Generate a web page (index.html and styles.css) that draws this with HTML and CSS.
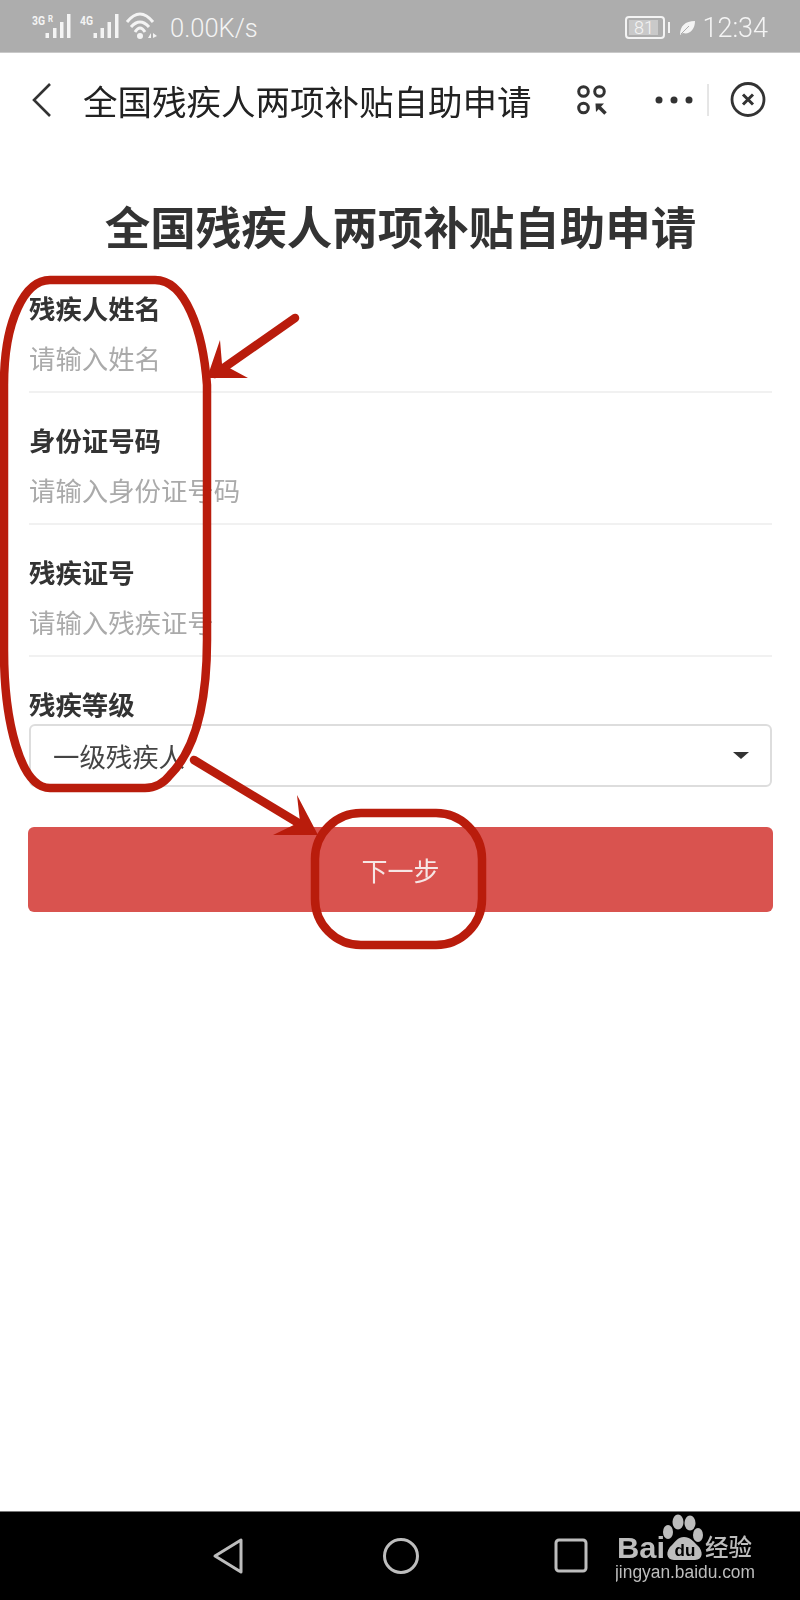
FILE: index.html
```html
<!DOCTYPE html>
<html lang="zh-CN">
<head>
<meta charset="utf-8">
<title>全国残疾人两项补贴自助申请</title>
<link rel="stylesheet" href="styles.css">
</head>
<body>
<div class="screen">
  <header class="status">
    <svg class="signals" width="130" height="52" viewBox="0 0 130 52">
      <text class="net" x="1" y="25" textLength="13" lengthAdjust="spacingAndGlyphs">3G</text><text class="net-r" x="17" y="22" textLength="5" lengthAdjust="spacingAndGlyphs">R</text>
      <g fill="#f4f4f4">
        <rect x="14.500" y="33" width="3.500" height="5"/><rect x="22" y="28" width="3.500" height="10"/><rect x="29" y="22" width="3.500" height="16"/><rect x="36" y="14" width="3.500" height="24"/>
      </g>
      <text class="net" x="49" y="25" textLength="13" lengthAdjust="spacingAndGlyphs">4G</text>
      <g fill="#f4f4f4">
        <rect x="62.500" y="33" width="3.500" height="5"/><rect x="69.500" y="28" width="3.500" height="10"/><rect x="76.500" y="22" width="3.500" height="16"/><rect x="84" y="14" width="3.500" height="24"/>
      </g>
      <g fill="none" stroke="#f4f4f4" stroke-width="3">
        <path d="M96 22 Q109 6 122 22"/><path d="M100 27 Q109 17 118 27"/><path d="M104 32 Q109 24 114 32"/>
      </g>
      <circle cx="109" cy="36" r="3" fill="#f4f4f4"/>
      <path d="M117 38 L120 33 V38 Z M122 33 L126 36 L122 38 Z" fill="#f4f4f4"/>
    </svg>
    <span class="speed">0.00K/s</span>
    <div class="status-right">
      <span class="battery"><span class="battery-level">81</span></span>
      <span class="battery-nub"></span>
      <svg class="leaf" width="16" height="16" viewBox="0 0 16 16"><path d="M1 15 C1 6 6 1 16 1 C16 10 10 15 4 13 Z" fill="#f4f4f4"/><path d="M2 14 L10 6" stroke="#adadad" stroke-width="1"/></svg>
      <span class="clock">12:34</span>
    </div>
  </header>

  <nav class="navbar">
    <svg class="back" width="20" height="34" viewBox="0 0 20 34"><path d="M18 1 L2 17 L18 33" fill="none" stroke="#333" stroke-width="2.600"/></svg>
    <span class="nav-title">全国残疾人两项补贴自助申请</span>
    <svg class="nav-actions" width="200" height="40" viewBox="0 0 200 40">
      <g fill="none" stroke="#333" stroke-width="3">
        <circle cx="7.500" cy="11.500" r="4.800"/><circle cx="23.500" cy="11.500" r="4.800"/><circle cx="7.500" cy="28" r="4.800"/>
      </g>
      <path d="M19.500 23.500 H28 L20 32 Z" fill="#333"/>
      <path d="M22 26 L29.500 33.500" stroke="#333" stroke-width="3.500"/>
      <g fill="#333"><circle cx="83" cy="20" r="3.500"/><circle cx="98" cy="20" r="3.500"/><circle cx="113" cy="20" r="3.500"/></g>
      <path d="M132 4 V36" stroke="#ccc" stroke-width="1"/>
      <circle cx="172" cy="19.500" r="16" fill="none" stroke="#333" stroke-width="2.800"/>
      <path d="M167 14.500 L177 24.500 M177 14.500 L167 24.500" stroke="#333" stroke-width="3"/>
    </svg>
  </nav>

  <main class="page">
    <h1 class="page-title">全国残疾人两项补贴自助申请</h1>
    <form class="form">
      <div class="field">
        <div class="label">残疾人姓名</div>
        <div class="input">请输入姓名</div>
      </div>
      <div class="field">
        <div class="label">身份证号码</div>
        <div class="input">请输入身份证号码</div>
      </div>
      <div class="field">
        <div class="label">残疾证号</div>
        <div class="input">请输入残疾证号</div>
      </div>
      <div class="field field-select">
        <div class="label">残疾等级</div>
        <div class="select">
          <span class="select-value">一级残疾人</span>
          <span class="caret"></span>
        </div>
      </div>
      <div class="submit">下一步</div>
    </form>
  </main>

  <footer class="sysbar">
    <svg class="sys-back" width="34" height="38" viewBox="0 0 34 38"><path d="M30 3 V35 L4 19 Z" fill="none" stroke="#bdbdbd" stroke-width="3" stroke-linejoin="round"/></svg>
    <svg class="sys-home" width="38" height="38" viewBox="0 0 38 38"><circle cx="19" cy="19" r="16.500" fill="none" stroke="#bdbdbd" stroke-width="3"/></svg>
    <svg class="sys-recent" width="34" height="36" viewBox="0 0 34 36"><rect x="2" y="2" width="30" height="31" rx="3" fill="none" stroke="#bdbdbd" stroke-width="3"/></svg>
    <svg class="logo" width="148" height="72" viewBox="0 0 148 72">
      <text class="logo-bai" x="1" y="46" textLength="48" lengthAdjust="spacingAndGlyphs">Bai</text>
      <g fill="#bdbdbd">
        <ellipse cx="62" cy="10" rx="5.500" ry="7.500"/><ellipse cx="74" cy="11" rx="5.500" ry="7.500"/><ellipse cx="52" cy="20" rx="5" ry="7"/><ellipse cx="82" cy="23" rx="5" ry="7"/>
        <path d="M68 25 C74 25 77 29 81 33 C88 39 87 48 79 48 H58 C50 48 49 39 56 33 C60 29 62 25 68 25 Z"/>
      </g>
      <text class="logo-du" x="69" y="44">du</text>
      <text class="logo-cn" x="89" y="44">经验</text>
      <text class="logo-url" x="-1" y="66" textLength="140" lengthAdjust="spacingAndGlyphs">jingyan.baidu.com</text>
    </svg>
  </footer>

  <svg class="marks" width="800" height="1000" viewBox="0 0 800 1000">
    <g fill="none" stroke="#b91c0c" stroke-width="8.500" stroke-linecap="round">
      <path d="M50 280 H155 C185 280 203 330 207 385 V640 C207 690 200 745 170 775 Q160 788 145 788 H50 C20 788 4 720 4 650 V385 C4 320 25 280 50 280 Z"/>
      <rect x="315" y="813" width="167" height="132" rx="46"/>
      <path d="M295 318 L215 374"/>
      <path d="M194 760 L305 827"/>
    </g>
    <path d="M207 378 L220 340 L222 364 L248 378 Z" fill="#b91c0c"/>
    <path d="M318 835 L297 795 L300 822 L273 835 Z" fill="#b91c0c"/>
  </svg>
</div>
</body>
</html>
```

FILE: styles.css
```css
* { box-sizing: border-box; }
html, body { margin: 0; padding: 0; background: #fff; }
body { font-family: "Noto Sans CJK SC", "Noto Sans", sans-serif; }

.screen {
  position: relative;
  width: 800px;
  height: 1600px;
  display: flex;
  flex-direction: column;
  overflow: hidden;
  filter: blur(0.4px);
}

/* status bar */
.status {
  flex: none;
  height: 53px;
  background: #adadad;
  border-bottom: 1px solid #c9c9c9;
  display: flex;
  align-items: center;
  padding-left: 31px;
  padding-right: 32px;
  color: #f4f4f4;
}
.signals { flex: none; }
.net { font: 700 12.5px "Roboto", sans-serif; fill: #f4f4f4; }
.net-r { font: 700 9px "Roboto", sans-serif; fill: #f4f4f4; }
.speed {
  font: 300 25.5px/47px "Roboto", sans-serif;
  padding-top: 5px;
  margin-left: 9px;
}
.status-right {
  margin-left: auto;
  display: flex;
  align-items: center;
}
.battery {
  width: 40px;
  height: 23px;
  margin-top: 2px;
  border: 2px solid #f4f4f4;
  border-radius: 4px;
  padding: 2px 5px 2px 2px;
  display: flex;
}
.battery-level {
  flex: 1;
  background: #c9c9c9;
  font: 300 18px/16px "Roboto", sans-serif;
  text-align: center;
}
.battery-nub {
  width: 2px;
  height: 11px;
  margin-top: 2px;
  margin-left: 3px;
  background: #f4f4f4;
}
.leaf { margin-left: 9px; margin-top: 4px; }
.clock {
  font: 300 27px/47px "Roboto", sans-serif;
  padding-top: 5px;
  margin-left: 7px;
}

/* navigation */
.navbar {
  flex: none;
  height: 94px;
  display: flex;
  align-items: center;
  padding-left: 32px;
  color: #222;
}
.nav-title {
  font-size: 34.5px;
  line-height: 44px;
  margin-left: 31px;
  white-space: nowrap;
}
.nav-actions { margin-left: 44px; flex: none; }

/* page */
.page { flex: 1; padding: 0 27px 0 28px; }
.page-title {
  margin: 51px 0 40px;
  font-size: 45.5px;
  line-height: 54px;
  font-weight: 700;
  color: #333;
  text-align: center;
  white-space: nowrap;
}
.field { padding: 0 1px; margin-bottom: 31px; }
.label {
  height: 36px;
  font-size: 26.4px;
  line-height: 32px;
  font-weight: 700;
  color: #333;
}
.input {
  height: 65px;
  font-size: 26.4px;
  line-height: 60px;
  color: #aaa;
  border-bottom: 2px solid #f1f1f1;
}
.select {
  height: 63px;
  border: 2px solid #ddd;
  border-radius: 6px;
  padding: 0 21px 0 22px;
  display: flex;
  align-items: center;
  justify-content: space-between;
  font-size: 26.4px;
  color: #444;
}
.select-value { line-height: 55px; }
.caret {
  width: 0;
  height: 0;
  border-left: 8px solid transparent;
  border-right: 8px solid transparent;
  border-top: 7px solid #333;
}
.field-select { margin-bottom: 40px; }
.submit {
  height: 85px;
  background: #d9534f;
  border-radius: 6px;
  color: #f6e6e5;
  font-size: 26px;
  line-height: 85px;
  text-align: center;
}

/* system bar */
.sysbar {
  flex: none;
  height: 89px;
  background: #000;
  border-top: 1px solid #777;
  display: flex;
  align-items: flex-start;
  padding-left: 211px;
}
.sys-back { margin-top: 25px; }
.sys-home { margin-top: 25px; margin-left: 137px; }
.sys-recent { margin-top: 26px; margin-left: 134px; }
.logo { margin-left: 28px; }
.logo-bai { font: 700 30px "Liberation Sans", sans-serif; fill: #bdbdbd; }
.logo-du { font: 700 17px "Liberation Sans", sans-serif; fill: #000; text-anchor: middle; }
.logo-cn { font: 500 23.5px "Noto Sans CJK SC", sans-serif; fill: #bdbdbd; }
.logo-url { font: 400 18px "Liberation Sans", sans-serif; fill: #bdbdbd; }

/* hand-drawn annotations on top of the screenshot */
.marks {
  position: absolute;
  left: 0;
  top: 0;
  pointer-events: none;
}
```
